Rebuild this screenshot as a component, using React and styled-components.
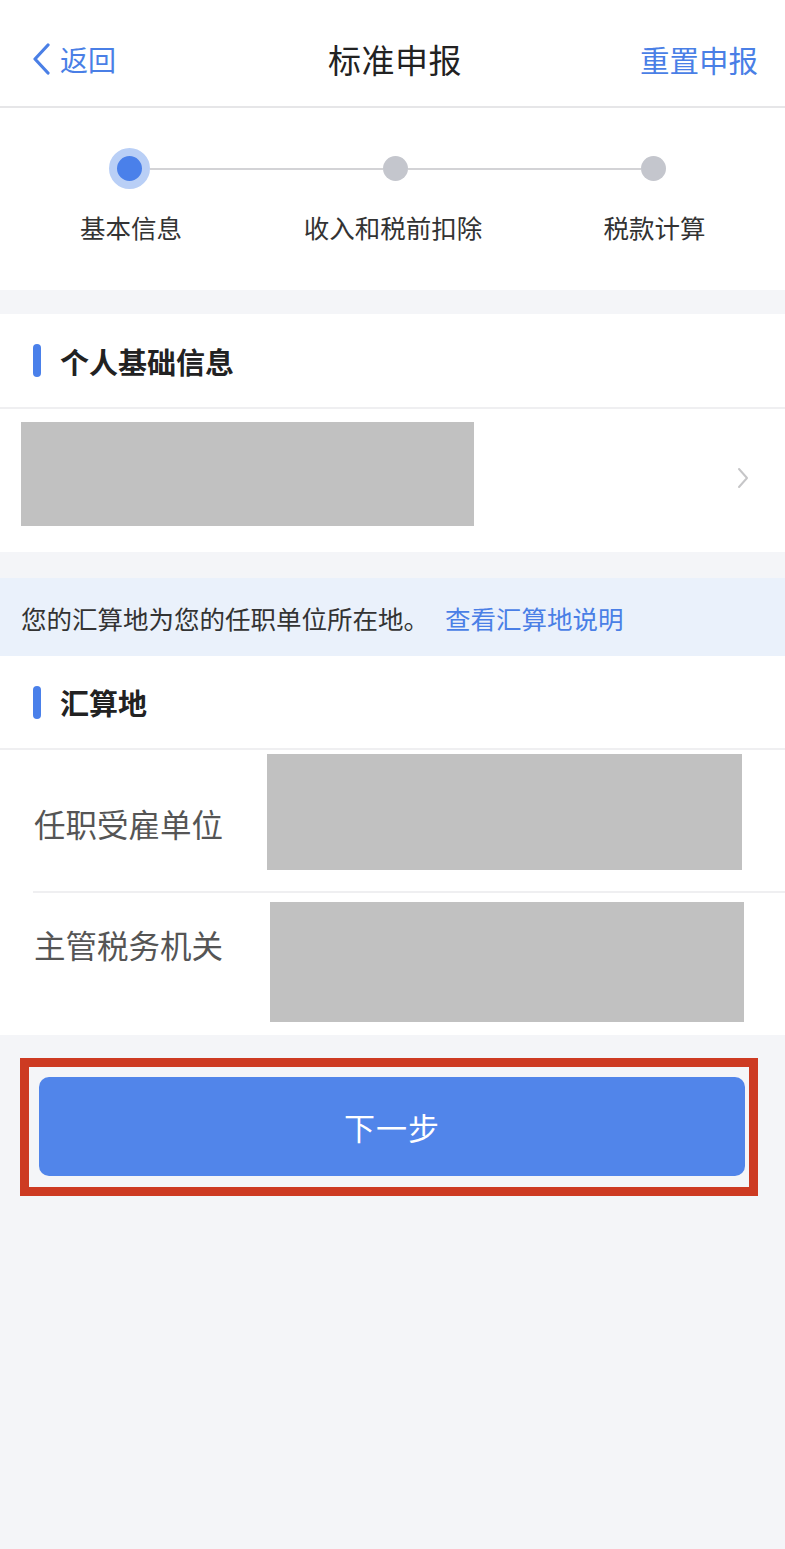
import React from "react";
import styled, { createGlobalStyle } from "styled-components";

const Global = createGlobalStyle`
  html, body {
    margin: 0;
    padding: 0;
    background: #f4f5f8;
    font-family: "Noto Sans CJK SC", "Noto Sans", sans-serif;
  }
  * { box-sizing: border-box; }
`;

const Page = styled.div`
  width: 785px;
  min-height: 1549px;
  background: #f4f5f8;
`;

const Header = styled.div`
  height: 108px;
  background: #fff;
  border-bottom: 2px solid #e6e6e8;
  display: flex;
  align-items: center;
  justify-content: space-between;
  padding: 12px 27px 0 32px;
`;

const Back = styled.div`
  display: flex;
  align-items: center;
  gap: 9px;
  color: #4a7fe6;
  font-size: 28px;
  width: 200px;
`;

const Title = styled.div`
  font-size: 33px;
  color: #222;
  letter-spacing: 0.5px;
`;

const Reset = styled.div`
  width: 200px;
  text-align: right;
  color: #4a7fe6;
  font-size: 29.5px;
`;

const Stepper = styled.div`
  background: #fff;
  height: 182px;
  padding-top: 40px;
`;

const Track = styled.div`
  display: flex;
  align-items: center;
  padding: 0 119px 0 109px;
  height: 41px;
`;

const Dot = styled.div`
  flex: 0 0 auto;
  width: ${(p) => (p.$active ? 41 : 25)}px;
  height: ${(p) => (p.$active ? 41 : 25)}px;
  border-radius: 50%;
  background: ${(p) => (p.$active ? "#4a80ea" : "#c4c6cd")};
  border: ${(p) => (p.$active ? "8px solid #b9cff6" : "none")};
`;

const Line = styled.div`
  flex: 1;
  height: 2px;
  background: #d3d3d6;
`;

const Labels = styled.div`
  display: grid;
  grid-template-columns: 262px 262px 261px;
  margin-top: 25px;
`;

const StepLabel = styled.div`
  text-align: center;
  font-size: 25.5px;
  color: #333;
  line-height: 1;
`;

const Gap = styled.div`
  height: ${(p) => p.$h}px;
`;

const Card = styled.div`
  background: #fff;
`;

const SectionHead = styled.div`
  height: ${(p) => p.$h}px;
  display: flex;
  align-items: center;
  gap: 19px;
  padding-left: 33px;
  border-bottom: 2px solid #efeff1;
  font-size: 29px;
  font-weight: 700;
  color: #222;
`;

const Bar = styled.span`
  width: 8px;
  height: 33px;
  border-radius: 4px;
  background: #4a80ea;
`;

const InfoRow = styled.div`
  height: 143px;
  display: flex;
  align-items: flex-start;
  justify-content: space-between;
  padding: 13px 36px 0 21px;
`;

const Redacted = styled.div`
  flex: 0 0 auto;
  width: ${(p) => p.$w}px;
  height: ${(p) => p.$h}px;
  margin-top: ${(p) => p.$top || 0}px;
  background: #c1c1c1;
`;

const Chevron = styled.svg`
  margin-top: 45px;
`;

const Notice = styled.div`
  height: 78px;
  background: #eaf1fb;
  display: flex;
  align-items: center;
  padding-left: 21px;
  font-size: 25.5px;
  color: #333;
`;

const Link = styled.span`
  color: #4a7fe6;
  margin-left: 16px;
`;

const FieldRow = styled.div`
  display: flex;
  align-items: flex-start;
  height: ${(p) => p.$h}px;
  padding-left: ${(p) => (p.$inset ? 1 : 34)}px;
  margin-left: ${(p) => (p.$inset ? 33 : 0)}px;
  border-top: ${(p) => (p.$inset ? "2px solid #efeff1" : "none")};
`;

const FieldLabel = styled.div`
  flex: 0 0 ${(p) => p.$w}px;
  padding-top: ${(p) => p.$top}px;
  font-size: 31.5px;
  line-height: 1;
  color: #555;
`;

const Frame = styled.div`
  width: 738px;
  margin: 23px 0 0 20px;
  border: 9px solid #cd3a22;
  padding: 10px 4px 11px 10px;
`;

const NextButton = styled.button`
  display: block;
  width: 100%;
  height: 99px;
  border: none;
  border-radius: 10px;
  background: #5185ea;
  color: #fff;
  font-family: "Noto Sans CJK SC", sans-serif;
  font-size: 31px;
  letter-spacing: 1px;
`;

export default function App() {
  return (
    <Page>
      <Global />
      <Header>
        <Back>
          <svg width="19" height="32" viewBox="0 0 19 32">
            <path d="M16 2 L3 16 L16 30" fill="none" stroke="#4a7fe6" strokeWidth="3.2" strokeLinecap="round" strokeLinejoin="round" />
          </svg>
          返回
        </Back>
        <Title>标准申报</Title>
        <Reset>重置申报</Reset>
      </Header>

      <Stepper>
        <Track>
          <Dot $active />
          <Line />
          <Dot />
          <Line />
          <Dot />
        </Track>
        <Labels>
          <StepLabel>基本信息</StepLabel>
          <StepLabel>收入和税前扣除</StepLabel>
          <StepLabel>税款计算</StepLabel>
        </Labels>
      </Stepper>

      <Gap $h={24} />

      <Card>
        <SectionHead $h={95}>
          <Bar />
          个人基础信息
        </SectionHead>
        <InfoRow>
          <Redacted $w={453} $h={104} />
          <Chevron width="12" height="22" viewBox="0 0 12 22">
            <path d="M2 2 L10 11 L2 20" fill="none" stroke="#c6c6c8" strokeWidth="2" strokeLinecap="round" strokeLinejoin="round" />
          </Chevron>
        </InfoRow>
      </Card>

      <Gap $h={26} />

      <Notice>
        您的汇算地为您的任职单位所在地。
        <Link>查看汇算地说明</Link>
      </Notice>

      <Card>
        <SectionHead $h={94}>
          <Bar />
          汇算地
        </SectionHead>
        <FieldRow $h={141}>
          <FieldLabel $w={233} $top={58}>任职受雇单位</FieldLabel>
          <Redacted $w={475} $h={116} $top={4} />
        </FieldRow>
        <FieldRow $inset $h={144}>
          <FieldLabel $w={236} $top={36}>主管税务机关</FieldLabel>
          <Redacted $w={474} $h={120} $top={9} />
        </FieldRow>
      </Card>

      <Frame>
        <NextButton>下一步</NextButton>
      </Frame>
    </Page>
  );
}
